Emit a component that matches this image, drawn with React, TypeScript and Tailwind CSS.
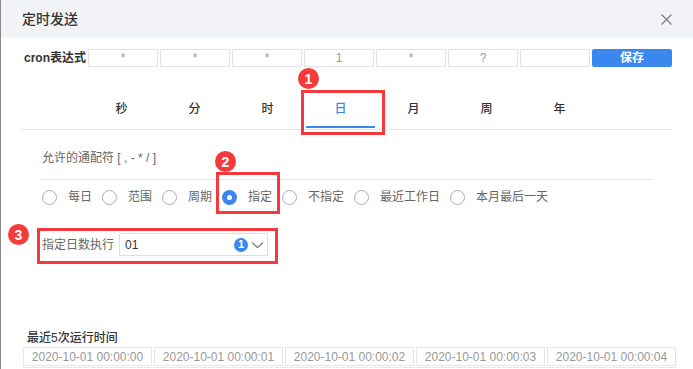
import { useState } from "react";

const FIELDS = ["*", "*", "*", "1", "*", "?", ""];
const TABS = ["秒", "分", "时", "日", "月", "周", "年"];
const OPTIONS = ["每日", "范围", "周期", "指定", "不指定", "最近工作日", "本月最后一天"];
const TIMES = [
  "2020-10-01 00:00:00",
  "2020-10-01 00:00:01",
  "2020-10-01 00:00:02",
  "2020-10-01 00:00:03",
  "2020-10-01 00:00:04",
];

function Badge({ n, className }: { n: number; className: string }) {
  return (
    <span
      className={`absolute flex h-[21px] w-[21px] items-center justify-center rounded-full bg-[#f43a3a] text-[14px] font-bold leading-none text-white ${className}`}
    >
      {n}
    </span>
  );
}

export default function App() {
  const [activeTab, setActiveTab] = useState("日");
  const [option, setOption] = useState("指定");

  return (
    <div
      className="relative h-[369px] w-[693px] overflow-hidden border-l border-[#8c8c8c] bg-white text-[#333]"
      style={{ fontFamily: '"Liberation Sans", "Noto Sans CJK SC", sans-serif' }}
    >
      {/* Header */}
      <header className="flex h-[38px] items-center justify-between bg-[#f2f3f7] pl-[21px] pr-[21px]">
        <h1 className="text-[14px] font-medium text-[#333]">定时发送</h1>
        <svg width="11" height="11" viewBox="0 0 11 11" className="text-[#777]">
          <path d="M0.5 0.5L10.5 10.5M10.5 0.5L0.5 10.5" stroke="currentColor" strokeWidth="1.1" />
        </svg>
      </header>

      {/* Cron expression */}
      <div className="mt-[11px] flex h-[18px] items-center pl-[23px]">
        <span className="w-[64px] text-[12px] font-bold text-[#333]">cron表达式</span>
        <div className="flex gap-[2px]">
          {FIELDS.map((f, i) => (
            <div
              key={i}
              className="flex h-[18px] w-[70px] items-center justify-center border border-[#e3e3e3] text-[12px] text-[#999]"
            >
              {f}
            </div>
          ))}
          <button
            type="button"
            className="h-[18px] w-[80px] rounded-[2px] bg-[#3b87f0] text-[12px] font-bold leading-none text-white"
          >
            保存
          </button>
        </div>
      </div>

      {/* Tabs */}
      <nav className="ml-[21px] mt-[22px] flex h-[41px] w-[650px] border-b border-[#e8e8e8] pl-[63px]">
        {TABS.map((t) => (
          <button
            key={t}
            type="button"
            onClick={() => setActiveTab(t)}
            className={`relative flex w-[73px] items-center justify-center text-[12px] font-medium ${
              activeTab === t ? "text-[#3b87f0]" : "text-[#333]"
            }`}
          >
            {t}
            {activeTab === t && (
              <span className="absolute inset-x-[2px] bottom-[1px] h-[2px] bg-[#3b87f0]" />
            )}
          </button>
        ))}
      </nav>

      {/* Day settings */}
      <section className="ml-[39px] w-[612px]">
        <p className="mt-[20px] pl-[2px] text-[12px] leading-[17px] text-[#666]">允许的通配符 [ , - * / ]</p>
        <div className="mt-[12px] border-t border-[#e8e8e8]" />
        <div className="mt-[9px] flex h-[16px] items-center pl-[2px]">
          {OPTIONS.map((o) => (
            <label
              key={o}
              onClick={() => setOption(o)}
              className="mr-[10px] flex cursor-pointer items-center text-[12px] text-[#666]"
            >
              {option === o ? (
                <span className="mr-[11px] flex h-[15px] w-[15px] items-center justify-center rounded-full bg-[#3b87f0]">
                  <span className="h-[5px] w-[5px] rounded-full bg-white" />
                </span>
              ) : (
                <span className="mr-[11px] h-[15px] w-[15px] rounded-full border border-[#a9adb3]" />
              )}
              {o}
            </label>
          ))}
        </div>

        <div className="mt-[28px] flex h-[23px] items-center pl-[2px]">
          <span className="w-[77px] text-[12px] text-[#666]">指定日数执行</span>
          <div className="flex h-[23px] w-[149px] items-center border border-[#dcdfe6] pl-[5px] pr-[3px]">
            <span className="flex-1 text-[12px] text-[#333]">01</span>
            <span className="flex h-[14px] w-[14px] items-center justify-center rounded-full bg-[#3b87f0] text-[11px] font-bold leading-none text-white">
              1
            </span>
            <svg width="13" height="8" viewBox="0 0 13 8" className="ml-[3px] text-[#7a8899]">
              <path d="M1 1.5L6.5 6.5L12 1.5" fill="none" stroke="currentColor" strokeWidth="1.3" />
            </svg>
          </div>
        </div>
      </section>

      {/* Last runs */}
      <section className="ml-[21px] mt-[74px]">
        <p className="pl-[5px] text-[12px] font-medium leading-[16px] text-[#333]">最近5次运行时间</p>
        <div className="mt-[1px] flex w-[655px] gap-[2px] border-b border-[#e8e8e8] pb-[1px] pl-[1px]">
          {TIMES.map((t) => (
            <div
              key={t}
              className="flex h-[19px] w-[129px] items-center justify-center border border-[#e6e6e6] text-[12px] text-[#999]"
            >
              {t}
            </div>
          ))}
        </div>
      </section>

      {/* Annotations */}
      <span className="pointer-events-none absolute left-[300px] top-[90px] h-[45px] w-[84px] border-[3px] border-[#f43a3a]" />
      <span className="pointer-events-none absolute left-[215px] top-[172px] h-[42px] w-[64px] border-[3px] border-[#f43a3a]" />
      <span className="pointer-events-none absolute left-[36px] top-[228px] h-[36px] w-[241px] border-[3px] border-[#f43a3a]" />
      <Badge n={1} className="left-[297px] top-[68px]" />
      <Badge n={2} className="left-[214px] top-[151px]" />
      <Badge n={3} className="left-[7px] top-[224px]" />
    </div>
  );
}
